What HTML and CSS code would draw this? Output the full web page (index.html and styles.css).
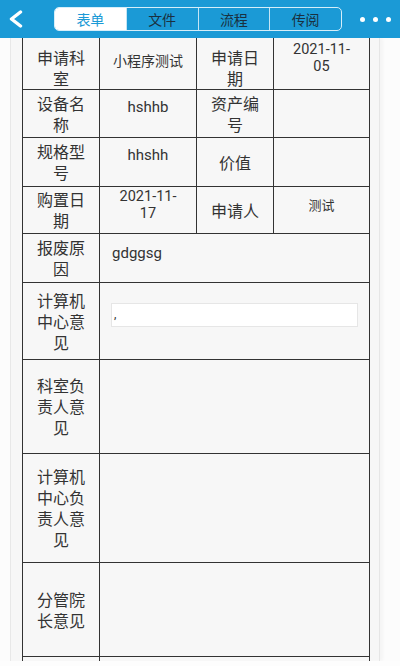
FILE: index.html
```html
<!DOCTYPE html>
<html lang="zh-CN">
<head>
<meta charset="utf-8">
<title>表单</title>
<link rel="stylesheet" href="styles.css">
</head>
<body>
<header class="topbar">
  <div class="back">
    <svg width="16" height="18" viewBox="0 0 16 18"><polyline points="12.5,2 3.5,9 12.5,16" fill="none" stroke="#fff" stroke-width="3.4" stroke-linecap="round" stroke-linejoin="round"/></svg>
  </div>
  <nav class="tabs">
    <span class="tab active">表单</span>
    <span class="tab">文件</span>
    <span class="tab">流程</span>
    <span class="tab">传阅</span>
  </nav>
  <div class="more"><i class="dot"></i><i class="dot"></i><i class="dot"></i></div>
</header>
<main class="page">
  <section class="card">
    <div class="form">
      <div class="cell label first">申请科室</div>
      <div class="cell value first">小程序测试</div>
      <div class="cell label first">申请日期</div>
      <div class="cell date date-first">2021-11-<br>05</div>

      <div class="cell label">设备名称</div>
      <div class="cell value">hshhb</div>
      <div class="cell label">资产编号</div>
      <div class="cell value"></div>

      <div class="cell label">规格型号</div>
      <div class="cell value">hhshh</div>
      <div class="cell label">价值</div>
      <div class="cell value"></div>

      <div class="cell label">购置日期</div>
      <div class="cell date">2021-11-<br>17</div>
      <div class="cell label">申请人</div>
      <div class="cell value small">测试</div>

      <div class="cell label">报废原因</div>
      <div class="cell wide text">gdggsg</div>

      <div class="cell label">计算机中心意见</div>
      <div class="cell wide field"><div class="input">,</div></div>

      <div class="cell label">科室负责人意见</div>
      <div class="cell wide"></div>

      <div class="cell label">计算机中心负责人意见</div>
      <div class="cell wide"></div>

      <div class="cell label">分管院长意见</div>
      <div class="cell wide"></div>

      <div class="cell label"></div>
      <div class="cell wide"></div>
    </div>
  </section>
</main>
<div class="bottom-strip"></div>
</body>
</html>
```
FILE: styles.css
```css
* { box-sizing: border-box; }
html, body { margin: 0; padding: 0; }
body {
  width: 400px;
  height: 666px;
  overflow: hidden;
  background: #fcfcfc;
  font-family: Roboto, "Noto Sans CJK SC", sans-serif;
  color: #333;
}

.topbar {
  height: 38px;
  background: #1b9ad6;
  display: flex;
  align-items: center;
}
.back {
  width: 54px;
  height: 38px;
  display: flex;
  align-items: center;
  padding-left: 8px;
}
.back svg { display: block; }

.tabs {
  width: 288px;
  height: 24px;
  display: flex;
  border: 1px solid #d6eef9;
  border-radius: 5px;
  overflow: hidden;
}
.tab {
  flex: 1;
  display: flex;
  align-items: center;
  justify-content: center;
  font-size: 14px;
  color: #1a3040;
  border-left: 1px solid #c4e5f5;
}
.tab:first-child { border-left: none; }
.tab.active {
  background: #fff;
  color: #1b9ad6;
}

.more {
  flex: 1;
  display: flex;
  align-items: center;
  gap: 8px;
  padding-left: 18px;
}
.dot {
  width: 5px;
  height: 5px;
  border-radius: 50%;
  background: #fff;
  display: block;
}

.page {
  height: 623px;
  overflow: hidden;
  padding-left: 10px;
}
.card {
  width: 370px;
  height: 100%;
  background: #f7f7f7;
  border-left: 1px solid #e8e8e8;
  border-right: 1px solid #e6e6e6;
  padding: 0 9px 0 11px;
  box-shadow: 3px 0 3px rgba(0,0,0,0.03);
}

.form {
  display: grid;
  grid-template-columns: 77px 97px 77px 96px;
  grid-template-rows: 52px 48px 49px 47px 49px 77px 94px 109px 94px 60px;
  border-left: 1px solid #333;
  width: 348px;
}
.cell {
  border-right: 1px solid #333;
  border-bottom: 1px solid #333;
  background: #f7f7f7;
}
.label {
  display: flex;
  align-items: center;
  justify-content: center;
  text-align: center;
  font-size: 16px;
  line-height: 21px;
  padding: 2px 7px 0;
  color: #333;
}
.label.first { padding-top: 10px; }

.value {
  text-align: center;
  font-size: 15px;
  line-height: 18px;
  padding: 8px 6px 0;
}
.value.first {
  font-size: 14px;
  padding-top: 14px;
}
.value.small {
  font-size: 13px;
  padding-top: 10px;
}
.date {
  text-align: center;
  font-size: 14.5px;
  line-height: 17px;
  padding: 1px 6px 0;
}
.date-first { padding-top: 3px; }

.wide { grid-column: 2 / 5; }
.text {
  font-size: 15px;
  line-height: 18px;
  padding: 10px 12px 0;
}
.field { padding: 20px 11px 0; }
.input {
  height: 24px;
  background: #fff;
  border: 1px solid #e6e6e6;
  font-size: 12px;
  line-height: 20px;
  padding-left: 2px;
  color: #333;
}

.bottom-strip {
  height: 5px;
  background: #fdfdfd;
}
```
